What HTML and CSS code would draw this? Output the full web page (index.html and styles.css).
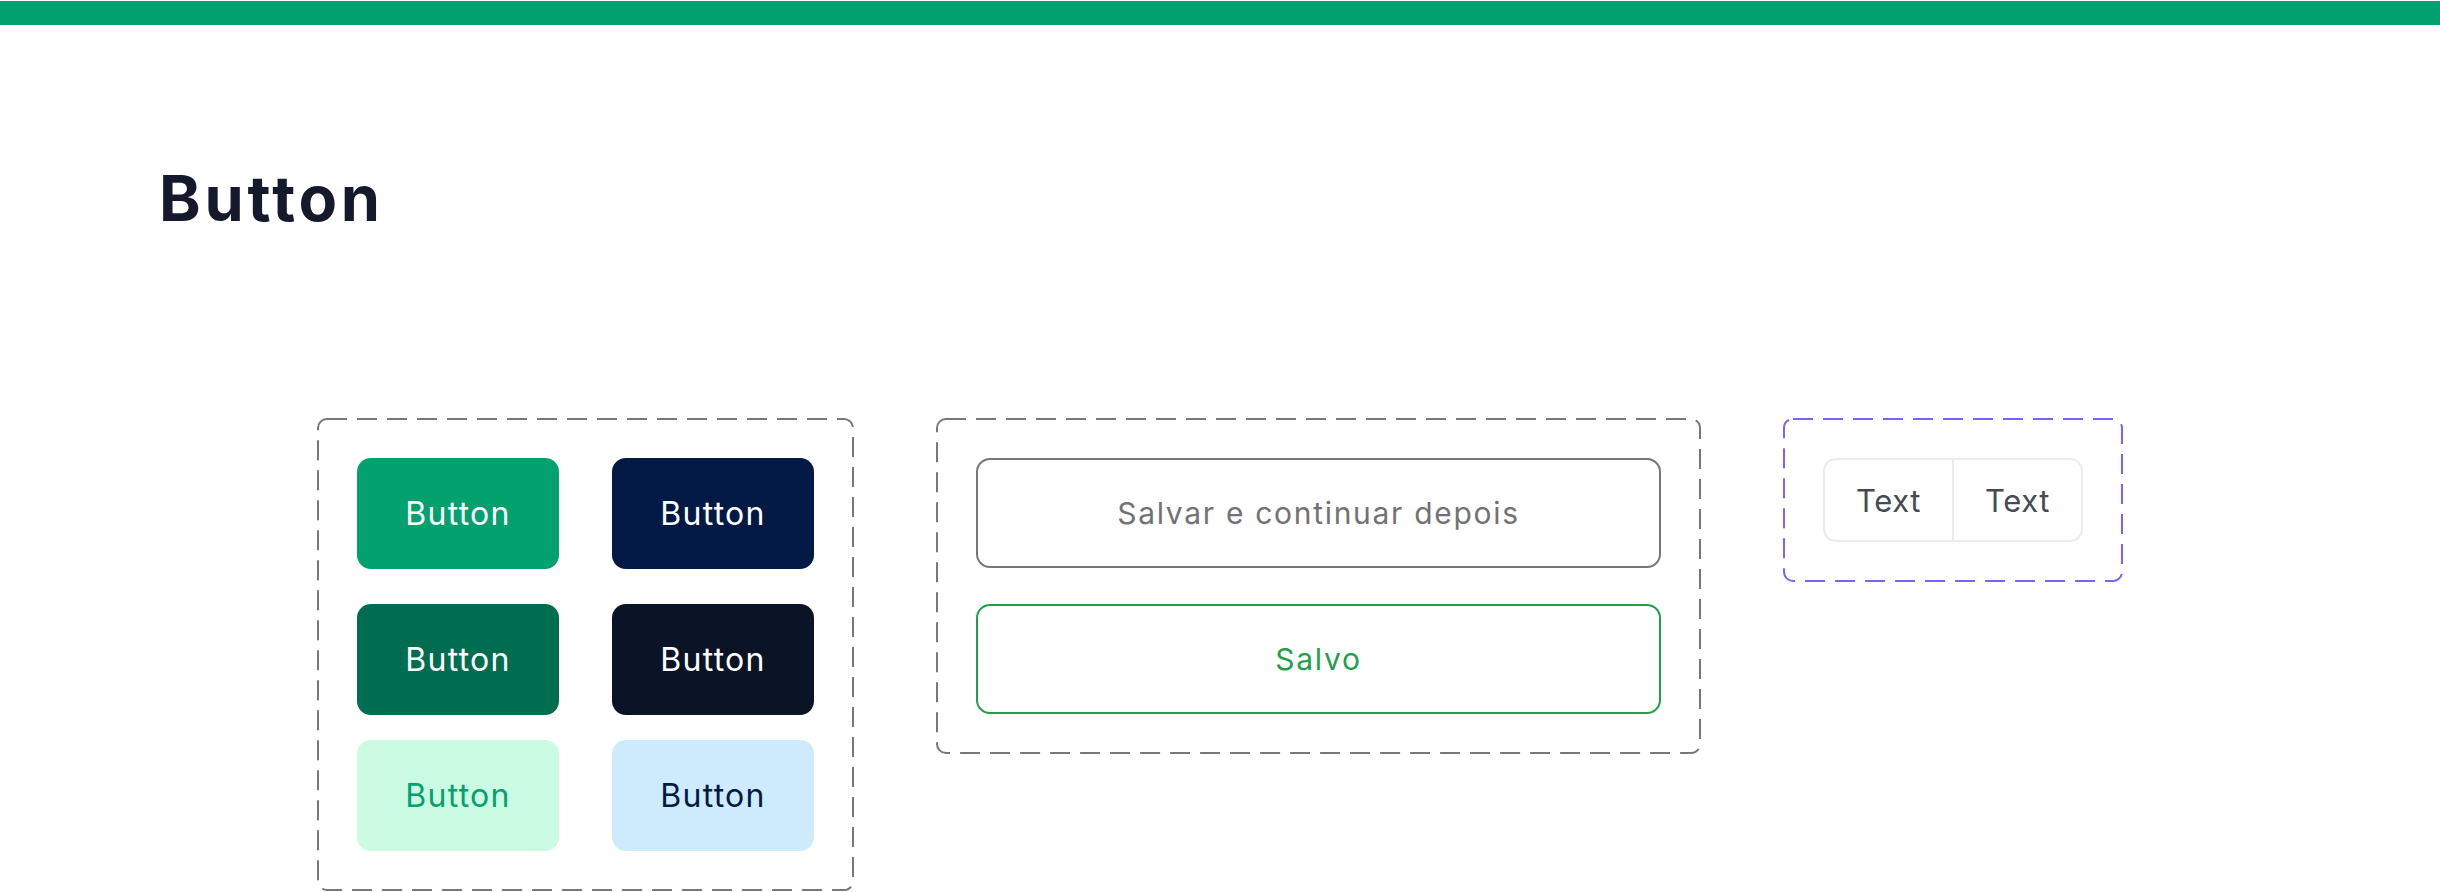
FILE: index.html
```html
<!DOCTYPE html>
<html lang="pt-BR">
<head>
    <meta charset="UTF-8">
    <meta name="viewport" content="width=device-width, initial-scale=1.0">
    <title>Button</title>
    <link rel="stylesheet" href="styles.css">
</head>
<body>
    <!-- faixa verde do topo -->
    <header class="topbar"></header>

    <main class="page">
        <h1 class="title">Button</h1>

        <section class="sets">
            <!-- variantes de cor -->
            <div class="set set-colors">
                <svg class="frame" aria-hidden="true"><rect></rect></svg>
                <button class="btn btn-green">Button</button>
                <button class="btn btn-navy">Button</button>
                <button class="btn btn-forest">Button</button>
                <button class="btn btn-ink">Button</button>
                <button class="btn btn-mint last">Button</button>
                <button class="btn btn-sky last">Button</button>
            </div>

            <!-- estados de salvar -->
            <div class="set set-save">
                <svg class="frame" aria-hidden="true"><rect></rect></svg>
                <button class="outline outline-gray">Salvar e continuar depois</button>
                <button class="outline outline-green">Salvo</button>
            </div>

            <!-- grupo segmentado -->
            <div class="set set-segment">
                <svg class="frame frame-purple" aria-hidden="true"><rect></rect></svg>
                <div class="segment">
                    <span class="segment-item">Text</span>
                    <span class="segment-item">Text</span>
                </div>
            </div>
        </section>
    </main>
</body>
</html>
```

FILE: styles.css
```css
html,body{
    margin: 0;
    background-color: #fff;
    font-family: "Inter", "Noto Sans", sans-serif;
}
.topbar{
    height: 24px;
    margin-top: 1px;
    background-color: #03a070;
}
.page{
    padding-left: 159px;
}
.title{
    margin: 142px 0 0;
    font-size: 63px;
    line-height: 62px;
    font-weight: 700;
    letter-spacing: 3.8px;
    color: #141a2b;
}
.sets{
    display: flex;
    align-items: flex-start;
    gap: 82px;
    margin-top: 189px;
    padding-left: 158px;
}
/* caixa tracejada estilo figma */
.set{
    position: relative;
    padding: 40px;
}
.frame{
    position: absolute;
    inset: 0;
    width: 100%;
    height: 100%;
    pointer-events: none;
}
.frame rect{
    x: 1px;
    y: 1px;
    width: calc(100% - 2px);
    height: calc(100% - 2px);
    rx: 9px;
    fill: none;
    stroke: #787878;
    stroke-width: 2;
    stroke-dasharray: 20 10;
}
.frame-purple rect{
    stroke: #7b61ff;
}
button{
    font-family: inherit;
    border: 0;
    margin: 0;
    padding: 0;
}
.set-colors{
    display: grid;
    grid-template-columns: 202px 202px;
    column-gap: 53px;
    row-gap: 35px;
}
.btn{
    height: 111px;
    border-radius: 14px;
    font-size: 32px;
    letter-spacing: 1.3px;
    color: #fff;
}
.btn.last{
    margin-top: -10px;
}
.btn-green{ background-color: #02a16e; }
.btn-navy{ background-color: #011944; }
.btn-forest{ background-color: #006c50; }
.btn-ink{ background-color: #0b1327; }
.btn-mint{ background-color: #ccfbe3; color: #02a16e; }
.btn-sky{ background-color: #ceebfe; color: #011944; }

.set-save{
    display: flex;
    flex-direction: column;
    gap: 36px;
}
.outline{
    width: 685px;
    height: 110px;
    border-radius: 14px;
    background-color: #fff;
    font-size: 30px;
    letter-spacing: 1.7px;
}
.outline-gray{
    border: 2px solid #767676;
    color: #727272;
}
.outline-green{
    border: 2px solid #1fa04a;
    color: #1fa04a;
}

.segment{
    display: flex;
    width: 260px;
    height: 84px;
    box-sizing: border-box;
    border: 2px solid #ebebeb;
    border-radius: 13px;
}
.segment-item{
    flex: 1;
    display: flex;
    align-items: center;
    justify-content: center;
    font-size: 31px;
    letter-spacing: 0.6px;
    color: #454b55;
}
.segment-item + .segment-item{
    border-left: 2px solid #ebebeb;
}
```
